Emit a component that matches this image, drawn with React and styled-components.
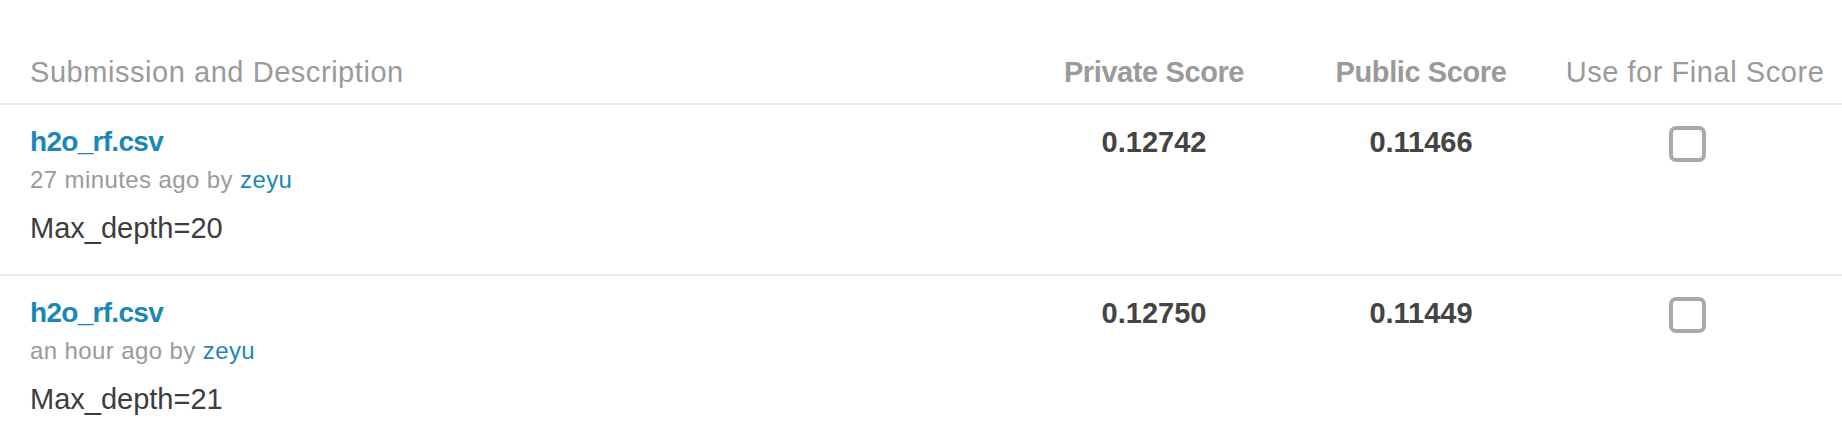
import React from "react";
import styled, { createGlobalStyle } from "styled-components";

const GlobalStyle = createGlobalStyle`
  html, body {
    margin: 0;
    padding: 0;
    background: #ffffff;
    overflow: hidden;
  }
  body {
    font-family: "Liberation Sans", Arial, sans-serif;
  }
`;

const Table = styled.div`
  width: 100%;
  display: flex;
  flex-direction: column;
`;

const Row = styled.div`
  display: grid;
  grid-template-columns: 1fr 268px 266px 282px;
  padding: ${(p) => (p.$header ? "56px 6px 14px 30px" : "21px 6px 29px 30px")};
  border-bottom: 2px solid #ebebeb;
`;

const HeadCell = styled.div`
  font-size: 29px;
  line-height: 33px;
  color: #9a9a9a;
  font-weight: ${(p) => (p.$bold ? 700 : 400)};
  letter-spacing: ${(p) => (p.$bold ? "-0.4px" : "0.55px")};
  text-align: ${(p) => (p.$center ? "center" : "left")};
  white-space: nowrap;
`;

const SubmissionCell = styled.div`
  display: flex;
  flex-direction: column;
`;

const FileLink = styled.a`
  font-size: 28px;
  line-height: 32px;
  font-weight: 700;
  letter-spacing: -0.7px;
  color: #1b87b8;
  text-decoration: none;
`;

const Meta = styled.div`
  margin-top: 8px;
  font-size: 24px;
  line-height: 28px;
  letter-spacing: 0.4px;
  color: #9a9a9a;
`;

const UserLink = styled.a`
  color: #1b87b8;
  text-decoration: none;
`;

const Description = styled.div`
  margin-top: 18px;
  font-size: 29px;
  line-height: 33px;
  color: #3d3d3d;
`;

const ScoreCell = styled.div`
  font-size: 29px;
  line-height: 33px;
  font-weight: 700;
  color: #444444;
  text-align: center;
`;

const CheckCell = styled.div`
  display: flex;
  justify-content: center;
  align-items: flex-start;
`;

const CheckBox = styled.span`
  box-sizing: border-box;
  width: 37px;
  height: 36px;
  margin-right: 15px;
  border: 4px solid #a9a9a9;
  border-radius: 7px;
  background: #ffffff;
  cursor: pointer;
`;

const submissions = [
  {
    file: "h2o_rf.csv",
    when: "27 minutes ago",
    user: "zeyu",
    desc: "Max_depth=20",
    priv: "0.12742",
    pub: "0.11466",
  },
  {
    file: "h2o_rf.csv",
    when: "an hour ago",
    user: "zeyu",
    desc: "Max_depth=21",
    priv: "0.12750",
    pub: "0.11449",
  },
];

export default function App() {
  return (
    <>
      <GlobalStyle />
      <Table>
        <Row $header>
          <HeadCell>Submission and Description</HeadCell>
          <HeadCell $bold $center>Private Score</HeadCell>
          <HeadCell $bold $center>Public Score</HeadCell>
          <HeadCell $center>Use for Final Score</HeadCell>
        </Row>
        {submissions.map((s, i) => (
          <Row key={i}>
            <SubmissionCell>
              <FileLink href="#">{s.file}</FileLink>
              <Meta>
                {s.when} by <UserLink href="#">{s.user}</UserLink>
              </Meta>
              <Description>{s.desc}</Description>
            </SubmissionCell>
            <ScoreCell>{s.priv}</ScoreCell>
            <ScoreCell>{s.pub}</ScoreCell>
            <CheckCell>
              <CheckBox role="checkbox" aria-checked="false" />
            </CheckCell>
          </Row>
        ))}
      </Table>
    </>
  );
}
